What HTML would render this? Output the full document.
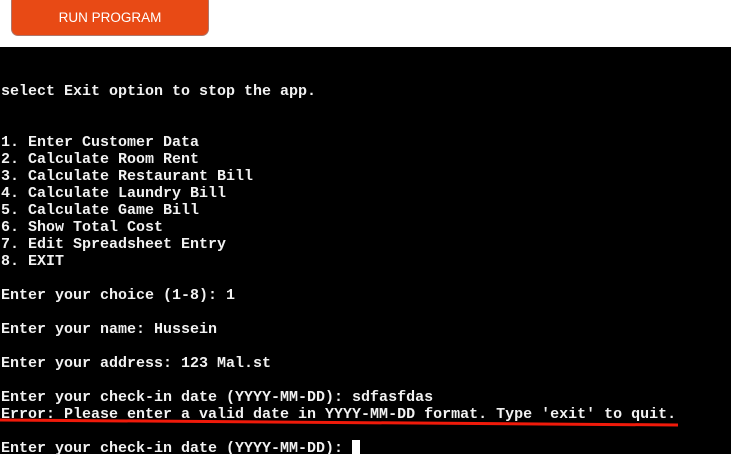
<!DOCTYPE html>
<html><head><style>
body{margin:0;width:734px;height:454px;background:#fff;position:relative;overflow:hidden}
.btn{position:absolute;left:11px;top:-6px;width:198px;height:42px;background:#e84a15;border:1px solid #b0766a;border-radius:7px;box-sizing:border-box;color:#fff;font:13.5px "Liberation Sans",Arial,sans-serif;text-align:center;line-height:46px}
.term{position:absolute;left:0;top:47px;width:731px;height:407px;background:#000}
pre{position:absolute;left:1px;top:83px;margin:0;font:bold 15px/17px "Liberation Mono",monospace;color:#f2f2f2}
.cur{display:inline-block;width:8px;height:15px;background:#fff;vertical-align:-3px}
</style></head><body>
<div class="btn">RUN PROGRAM</div>
<div class="term"></div>
<pre>select Exit option to stop the app.


1. Enter Customer Data
2. Calculate Room Rent
3. Calculate Restaurant Bill
4. Calculate Laundry Bill
5. Calculate Game Bill
6. Show Total Cost
7. Edit Spreadsheet Entry
8. EXIT

Enter your choice (1-8): 1

Enter your name: Hussein

Enter your address: 123 Mal.st

Enter your check-in date (YYYY-MM-DD): sdfasfdas
Error: Please enter a valid date in YYYY-MM-DD format. Type 'exit' to quit.

Enter your check-in date (YYYY-MM-DD): <span class="cur"></span></pre>
<svg style="position:absolute;left:0;top:0" width="734" height="454"><path d="M0 420 L678 425" stroke="#f01a0a" stroke-width="3" fill="none"/></svg>
</body></html>
